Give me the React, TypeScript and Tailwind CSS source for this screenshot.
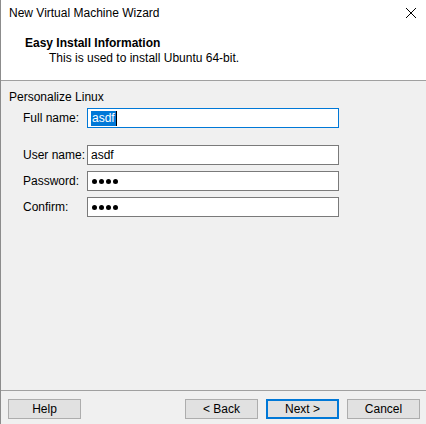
import React from 'react';

const font = { fontFamily: '"Liberation Sans", Arial, sans-serif' };

const Field = ({ label, value, focused, password, className }: { label: string; value: string; focused?: boolean; password?: boolean; className?: string }) => (
  <div className={`flex items-center ${className ?? ''}`}>
    <span className="w-[64px] pl-[22px] box-content text-[12px] leading-[15px] text-black whitespace-nowrap">{label}</span>
    <div
      className={`w-[252px] h-[20px] bg-white flex items-center pl-[3px] ${
        focused ? 'border border-[#0078d7]' : 'border border-[#7a7a7a]'
      }`}
    >
      {password ? (
        <span className="flex gap-[2px] pl-[1px]">
          <span className="w-[5px] h-[5px] rounded-full bg-black" />
          <span className="w-[5px] h-[5px] rounded-full bg-black" />
          <span className="w-[5px] h-[5px] rounded-full bg-black" />
          <span className="w-[5px] h-[5px] rounded-full bg-black" />
        </span>
      ) : focused ? (
        <span className="flex items-center">
          <span className="bg-[#0078d7] text-white text-[12px] leading-[15px] px-[1px]">{value}</span>
          <span className="w-[1px] h-[15px] bg-black" />
        </span>
      ) : (
        <span className="text-[12px] leading-[15px] text-black">{value}</span>
      )}
    </div>
  </div>
);

const Button = ({ label, primary }: { label: string; primary?: boolean }) => (
  <div
    className={`w-[73px] h-[20px] flex items-center justify-center bg-[#e1e1e1] text-[12px] leading-[15px] text-black ${
      primary ? 'border-2 border-[#0078d7]' : 'border border-[#adadad]'
    }`}
  >
    {label}
  </div>
);

export default function App() {
  return (
    <div className="w-[426px] h-[424px] flex flex-col border-l border-[#8c8c8c] bg-[#f0f0f0] overflow-hidden" style={font}>
      {/* Header */}
      <div className="h-[81px] bg-white border-b border-[#a0a0a0]">
        <div className="h-[26px] flex items-center justify-between pl-[8px] pr-[8px]">
          <span className="text-[12px] leading-[15px] text-black">New Virtual Machine Wizard</span>
          <svg width="12" height="12" viewBox="0 0 12 12" className="mr-[1px]">
            <path d="M1 1 L11 11 M11 1 L1 11" stroke="#000" strokeWidth="1" />
          </svg>
        </div>
        <div className="mt-[10px] pl-[24px] text-[12px] leading-[15px] font-bold text-black">Easy Install Information</div>
        <div className="pl-[48px] text-[12px] leading-[15px] text-black">This is used to install Ubuntu 64-bit.</div>
      </div>

      {/* Body */}
      <div className="flex-1 flex flex-col pt-[9px]">
        <div className="pl-[8px] text-[12px] leading-[15px] text-black">Personalize Linux</div>
        <Field className="mt-[3px]" label="Full name:" value="asdf" focused />
        <Field className="mt-[17px]" label="User name:" value="asdf" />
        <Field className="mt-[6px]" label="Password:" value="" password />
        <Field className="mt-[6px]" label="Confirm:" value="" password />
      </div>

      {/* Footer */}
      <div className="h-[34px] border-t border-[#a0a0a0] flex items-start pt-[8px] pl-[7px]">
        <Button label="Help" />
        <div className="flex-1" />
        <div className="flex gap-[8px] pr-[6px]">
          <Button label="< Back" />
          <Button label="Next >" primary />
          <Button label="Cancel" />
        </div>
      </div>
    </div>
  );
}
